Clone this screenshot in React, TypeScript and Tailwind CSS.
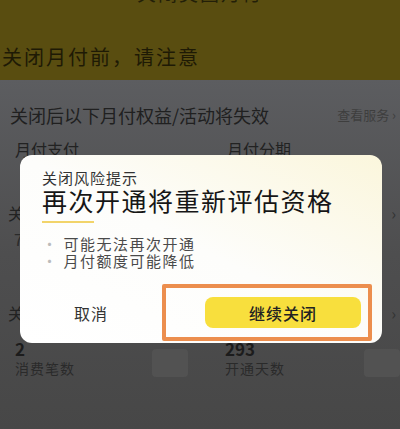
import React from 'react'

const font = { fontFamily: '"Noto Sans CJK SC", "Noto Sans", sans-serif' }

function StatCell({ value, label, className }: { value: string; label: string; className: string }) {
  return (
    <div className={`flex items-center pl-[15px] ${className}`}>
      <div className="flex-1">
        <div className="text-[17px] leading-[18px] font-bold text-[#1c1c1c]">{value}</div>
        <div className="text-[14px] leading-[20px] text-[#2a2a2a] tracking-[1px]">{label}</div>
      </div>
      <div className="w-[36px] h-[28px] mt-[8px] rounded-[4px] bg-[#525252]" />
    </div>
  )
}

export default function App() {
  return (
    <div className="relative w-[400px] h-[429px] overflow-hidden bg-[#474747]" style={font}>
      {/* dimmed page underneath */}
      <div className="h-[80px] bg-[#594d10] flex flex-col">
        <div className="relative h-[24px] -mt-[19px] flex items-center justify-center">
          <span className="absolute left-[-4px] text-[18px] text-[#231f08]">‹</span>
          <span className="text-[19px] text-[#231f08] tracking-[2px]">关闭美团月付</span>
        </div>
        <div className="mt-[38px] pl-[2px] text-[20px] leading-[28px] text-[#1e1a05] tracking-[2px]">关闭月付前，请注意</div>
      </div>

      <div className="h-[349px] bg-gradient-to-b from-[#5c5d60] via-[#4e4e4f] to-[#474747]">
        <div className="flex items-center justify-between pl-[10px] pr-[4px] pt-[23px]">
          <span className="text-[18px] leading-[24px] text-[#202020]">关闭后以下月付权益/活动将失效</span>
          <span className="text-[13px] text-[#3e3e3e]">查看服务 ›</span>
        </div>
        <div className="flex mt-[12px] text-[16px] leading-[20px] text-[#222]">
          <span className="w-[227px] pl-[15px]">月付支付</span>
          <span>月付分期</span>
        </div>
        <div className="flex justify-between pl-[8px] pr-[4px] mt-[42px] text-[16px] text-[#222]">
          <span>关</span>
          <span className="text-[#333]">›</span>
        </div>
        <div className="pl-[14px] mt-[2px] text-[16px] text-[#2a2a2a]">7</div>
        <div className="flex justify-between pl-[8px] pr-[4px] mt-[50px] text-[16px] text-[#222]">
          <span>关</span>
          <span className="text-[#333]">›</span>
        </div>
        <div className="flex mt-[15px]">
          <StatCell value="2" label="消费笔数" className="w-[212px] pr-[24px]" />
          <StatCell value="293" label="开通天数" className="flex-1 -ml-[2px]" />
        </div>
      </div>

      {/* modal */}
      <div className="absolute left-[20px] top-[155px] w-[362px] h-[188px] rounded-[12px] overflow-hidden bg-gradient-to-bl from-[#fbf6dc] via-[#fdfdfb] to-[#ffffff]">
        <div className="pl-[22px] pt-[14px]">
          <div className="text-[15px] leading-[18px] text-[#333] tracking-[1px]">关闭风险提示</div>
          <div className="text-[25px] leading-[26px] text-[#161616] tracking-[1.5px]">再次开通将重新评估资格</div>
          <div className="mt-[8px] w-[52px] h-[2px] bg-[#f2d46a]" />
          <div className="mt-[12px] text-[15px] leading-[17px] text-[#4a4a4a] tracking-[1.5px]">
            <div className="flex items-center gap-[5px]"><span className="text-[#bbb]">·</span>可能无法再次开通</div>
            <div className="flex items-center gap-[5px]"><span className="text-[#bbb]">·</span>月付额度可能降低</div>
          </div>
        </div>
        <div className="flex items-center mt-[28px]">
          <div className="w-[142px] flex justify-center text-[16px] text-[#333] tracking-[1px]">取消</div>
          <div className="flex-1 flex items-center pl-[43px] pr-[21px]">
            <div className="flex-1 h-[31px] rounded-[8px] bg-[#f8df3d] flex items-center justify-center text-[16px] font-medium text-[#222] tracking-[1px]">继续关闭</div>
          </div>
        </div>
      </div>

      {/* highlight box */}
      <div className="absolute left-[162px] top-[284px] w-[210px] h-[57px] border-[4px] border-[#ec8e4e] rounded-[2px]" />
    </div>
  )
}
